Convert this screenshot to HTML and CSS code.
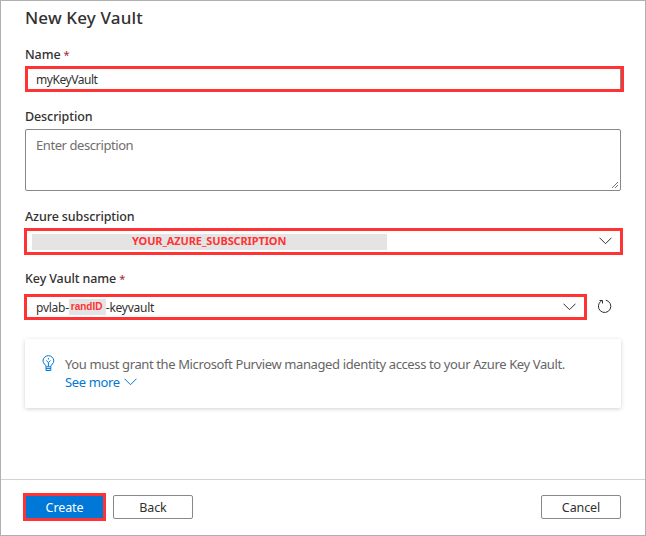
FILE: index.html
```html
<!DOCTYPE html>
<html lang="en">
<head>
<meta charset="utf-8">
<title>New Key Vault</title>
<link rel="stylesheet" href="styles.css">
</head>
<body>
<main class="panel">
  <form class="form">
    <h1 class="title"><span>New Key Vault</span></h1>
    <label class="label label-name"><span>Name</span> <i class="req">*</i></label>
    <div class="field field-name"><span class="t-name">myKeyVault</span></div>
    <label class="label label-desc"><span>Description</span></label>
    <div class="area"><span class="t-enter">Enter description</span>
      <svg class="grip" width="8" height="8" viewBox="0 0 8 8"><path d="M1 7 7 1M4 7l3-3"/></svg>
    </div>
    <label class="label label-sub"><span>Azure subscription</span></label>
    <div class="field field-sub">
      <div class="redacted"><span class="t-sub">YOUR_AZURE_SUBSCRIPTION</span></div>
      <svg class="chevron" width="13" height="8" viewBox="0 0 13 8"><path d="M.5.7 6.5 6.7l6-6"/></svg>
    </div>
    <label class="label label-kv"><span>Key Vault name</span> <i class="req">*</i></label>
    <div class="row">
      <div class="field field-kv">
        <span class="t-pv">pvlab-</span><b class="rand"><span>randID</span></b><span class="t-kv">-keyvault</span>
        <svg class="chevron" width="13" height="8" viewBox="0 0 13 8"><path d="M.5.7 6.5 6.7l6-6"/></svg>
      </div>
      <svg class="refresh" width="15" height="15" viewBox="0 0 15 15"><path d="M8.800 1.200a6.200 6.200 0 1 1-4.600.9M2.500 1.500h3v3"/></svg>
    </div>
    <section class="info">
      <svg class="bulb" width="13" height="17" viewBox="0 0 13 17"><path d="M4 11.8C4 9.5 1 8.800 1 5.900a5.400 5.200 0 0 1 10.800 0C11.800 8.800 8.800 9.500 8.800 11.800zM4 11.800v3.700h4.800v-3.700M4 13.600h4.800M6.400 11.500V7.500L4.300 5.500M6.400 7.500l2.100-2M6.400 3v1.500"/></svg>
      <div>
        <p class="line"><span class="t-info">You must grant the Microsoft Purview managed identity access to your Azure Key Vault.</span></p>
        <p class="line more"><span class="t-more">See more</span><svg class="chevron" width="13" height="8" viewBox="0 0 13 8"><path d="M.5.7 6.5 6.700l6-6"/></svg></p>
      </div>
    </section>
  </form>
  <footer class="footer">
    <button class="btn create"><span>Create</span></button>
    <button class="btn back"><span>Back</span></button>
    <button class="btn cancel"><span>Cancel</span></button>
  </footer>
</main>
</body>
</html>
```
FILE: styles.css
```css
* { box-sizing: border-box; }
body { margin: 0; background: #fff; font: 13px/18px "Noto Sans", "Open Sans", sans-serif; color: #323130; }
svg { display: block; flex: none; fill: none; stroke: currentColor; }
span { white-space: nowrap; }
.panel { height: 536px; border: 1px solid #b0b0b0; display: flex; flex-direction: column; }
.form { height: 478px; padding: 5px 24px 0; }
.title { margin: 0; height: 24px; font-size: 17px; line-height: 24px; font-weight: 500; letter-spacing: .15px; }
.label { display: flex; gap: 3px; height: 18px; font-weight: 500; font-size: 12.5px; letter-spacing: -.1px; }
.req { font-style: normal; color: #a4262c; font-weight: 400; font-size: 11px; }
.label-name { margin-top: 16px; }
.label-desc { margin-top: 16px; }
.label-sub { margin-top: 17px; }
.label-kv { margin-top: 15px; }
.field { display: flex; align-items: center; border: 3px solid #ff3333; font-size: 12px; }
.field-name { width: 599px; height: 26px; margin-top: 2px; padding: 2px 0 0 8px; letter-spacing: -.45px; box-shadow: inset -1px 0 #8a8886; }
.area { display: flex; justify-content: space-between; height: 62px; margin-top: 3px; padding: 6px 1px 1px 10px; border: 1px solid #8a8886; border-radius: 2px; color: #706e6c; letter-spacing: -.43px; }
.grip { align-self: flex-end; stroke: #555; stroke-width: .8; }
.field-sub { width: 599px; height: 27px; margin: 2px 0 0 -1px; padding: 0 8px 2px 5px; justify-content: space-between; }
.redacted { width: 355px; height: 16px; margin-top: 2px; padding-left: 100px; background: #e4e4e4; color: #ff3333; font-weight: 700; font-size: 11px; line-height: 14px; letter-spacing: -.12px; }
.row { display: flex; align-items: center; gap: 10px; margin: 6px 0 0 -1px; }
.field-kv { width: 563px; height: 26px; padding: 0 8px 0 9px; letter-spacing: -.25px; }
.field-kv .chevron { margin-left: auto; }
.t-pv, .t-kv { padding-top: 2px; }
.rand { width: 37px; height: 16px; padding-left: 2px; background: #e4e4e4; color: #ff3333; font: 700 10px/16px "Liberation Sans", Arial, sans-serif; letter-spacing: 0; }
.refresh { margin-top: -2px; }
.info { display: flex; gap: 10px; height: 69px; margin-top: 19px; padding: 16px 17px 0; border-radius: 2px; box-shadow: 0 1px 4px rgba(0,0,0,.18); color: #666; letter-spacing: -.38px; }
.bulb { color: #0078d4; }
.line { margin: 0; height: 18px; }
.more { display: flex; align-items: center; gap: 4px; color: #0078d4; }
.more .chevron { stroke: #0078d4; }
.footer { display: flex; flex: 1; align-items: flex-start; border-top: 1px solid #d2d2d2; padding: 13px 24px 0 22px; }
.btn { width: 80px; height: 24px; margin: 2px 0 0; padding: 1px 0 0; border: 1px solid #8a8886; border-radius: 2px; background: #fff; color: #323130; font: 12.5px/20px "Noto Sans", sans-serif; letter-spacing: -.1px; }
.create { width: 83px; height: 28px; margin: 0 7px 0 0; border: 3px solid #ff3333; border-radius: 0; background: #0078d7; color: #fff; }
.cancel { margin-left: auto; }
```
